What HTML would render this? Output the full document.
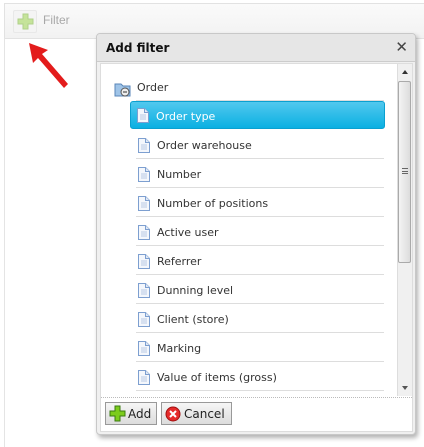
<!DOCTYPE html>
<html><head><style>
*{margin:0;padding:0;box-sizing:border-box}
body{width:424px;height:447px;background:#fff;position:relative;overflow:hidden;font-family:"DejaVu Sans","Liberation Sans",sans-serif;font-size:11px;color:#333}
.top{position:absolute;left:4px;top:3px;width:430px;height:36px;border:1px solid #e2e2e2;border-right:none;background:linear-gradient(#fafafa,#f2f2f2)}
.leftline{position:absolute;left:4px;top:38px;width:1px;height:409px;background:#e4e4e4}
.plusbtn{position:absolute;left:13px;top:10px;width:24px;height:23px;border:1px solid #e8e8e8;border-radius:2px;background:#f4f4f4}
.ftxt{position:absolute;left:43px;top:13px;color:#a8a8a8;font-size:12px;font-family:"Liberation Sans",sans-serif}
.dlg{position:absolute;left:96px;top:33px;width:320px;height:402px;background:#f0f0f0;border:1px solid #c8c8c8;border-radius:4px;box-shadow:2px 3px 5px rgba(0,0,0,.3)}
.title{position:absolute;left:0;top:0;width:318px;height:28px;background:#e6e6e6;border-bottom:1px solid #ccc;border-radius:4px 4px 0 0}
.title b{position:absolute;left:9px;top:7px;font-size:12px;color:#111;font-family:"DejaVu Sans",sans-serif}
.x{position:absolute;right:7px;top:4px;font-size:15px;font-weight:bold;color:#444}
.body{position:absolute;left:3px;top:29px;width:313px;height:369px;background:#fff;border:1px solid #ddd}
.list{position:absolute;left:0;top:0;width:296px;height:333px;overflow:hidden}
.sb{position:absolute;left:296px;top:17px;width:15px;height:315px;background:#f0f0f0;border-left:1px solid #ddd}
.thumb{position:absolute;left:297px;top:17px;width:13px;height:182px;border:1px solid #aaa;border-radius:2px;background:linear-gradient(90deg,#f4f4f4,#dcdcdc)}
.dots{position:absolute;left:0;top:333px;width:311px;border-top:1px dotted #bbb}
.row{position:absolute;left:35px;width:248px;height:29px;border-bottom:1px solid #ddd}
.row span{position:absolute;left:21px;top:9px}
.doc{position:absolute;left:2px;top:8px}
.sel{position:absolute;left:130px;top:101px;width:255px;height:28px;background:linear-gradient(#52c8ee,#0ab0e2);border:1px solid #0aa0d0;border-radius:3px;color:#fff}
.btn{position:absolute;top:402px;height:23px;border:1px solid #999;background:linear-gradient(#f6f6f6,#dcdcdc);font-size:12px;color:#222}
</style></head><body>
<svg width="0" height="0" style="position:absolute"><defs><symbol id="d" viewBox="0 0 12 15"><path d="M0.5 0.5h7l4 4v10h-11z" fill="#f4f7fc" stroke="#7d9fd0"/><path d="M7.5 0.5v4h4" fill="#dfe8f5" stroke="#7d9fd0"/><path d="M3 7h6M3 9h6M3 11h6" stroke="#b8c9e4"/></symbol></defs></svg>
<div class="top"></div>
<div class="leftline"></div>
<div class="plusbtn"><svg width="22" height="21" viewBox="0 0 22 21"><path d="M9 3h5v5h5v5h-5v5H9v-5H4V8h5z" fill="#c5e39a" stroke="#b0d08a"/></svg></div>
<div class="ftxt">Filter</div>
<svg style="position:absolute;left:26px;top:40px" width="46" height="52"><path d="M3 3 L22 10 L16 14 L42 44 L38 48 L12 18 L7 23 Z" fill="#e31c1c"/></svg>
<div class="dlg">
<div class="title"><b>Add filter</b><span class="x">✕</span></div>
<div class="body">
<div class="list">
<svg style="position:absolute;left:13px;top:16px" width="18" height="18"><path d="M1 4h6l2 2h7v10H1z" fill="#9fc4e8" stroke="#5a86b8"/><circle cx="11" cy="12" r="4" fill="#eee" stroke="#555"/><path d="M9 12h4" stroke="#333"/></svg>
<span style="position:absolute;left:36px;top:17px">Order</span>
<div style="position:absolute;left:35px;top:36px;width:248px;border-bottom:1px solid #ddd"></div>
<div class="row" style="top:66px"><svg class="doc" width="12" height="15"><use href="#d"/></svg><span>Order warehouse</span></div>
<div class="row" style="top:95px"><svg class="doc" width="12" height="15"><use href="#d"/></svg><span>Number</span></div>
<div class="row" style="top:124px"><svg class="doc" width="12" height="15"><use href="#d"/></svg><span>Number of positions</span></div>
<div class="row" style="top:153px"><svg class="doc" width="12" height="15"><use href="#d"/></svg><span>Active user</span></div>
<div class="row" style="top:182px"><svg class="doc" width="12" height="15"><use href="#d"/></svg><span>Referrer</span></div>
<div class="row" style="top:211px"><svg class="doc" width="12" height="15"><use href="#d"/></svg><span>Dunning level</span></div>
<div class="row" style="top:240px"><svg class="doc" width="12" height="15"><use href="#d"/></svg><span>Client (store)</span></div>
<div class="row" style="top:269px"><svg class="doc" width="12" height="15"><use href="#d"/></svg><span>Marking</span></div>
<div class="row" style="top:298px"><svg class="doc" width="12" height="15"><use href="#d"/></svg><span>Value of items (gross)</span></div>
</div>
<div style="position:absolute;left:296px;top:0;width:15px;height:17px;background:#f0f0f0;border-left:1px solid #ddd"><div style="position:absolute;left:4px;top:6px;border:3px solid transparent;border-bottom:4px solid #333;border-top:none"></div></div>
<div class="sb"><div style="position:absolute;left:4px;bottom:6px;border:3px solid transparent;border-top:4px solid #555;border-bottom:none"></div></div>
<div class="thumb"><div style="position:absolute;left:3px;top:86px;width:6px;height:6px;border-top:1px solid #666;border-bottom:1px solid #666"><div style="margin-top:2px;border-top:1px solid #666"></div></div></div>
<div class="dots"></div>
</div>
</div>
<div class="sel"><svg style="position:absolute;left:6px;top:6px" width="12" height="15"><use href="#d"/></svg><span style="position:absolute;left:25px;top:8px">Order type</span></div>
<div class="btn" style="left:105px;width:52px"><svg style="position:absolute;left:3px;top:2px" width="17" height="17"><path d="M6 1h5v5h5v5h-5v5H6v-5H1V6h5z" fill="#7ccc1c" stroke="#3a7a10"/></svg><span style="position:absolute;left:22px;top:4px">Add</span></div>
<div class="btn" style="left:161px;width:71px"><svg style="position:absolute;left:3px;top:3px" width="16" height="16"><circle cx="8" cy="8" r="7" fill="#e52a2a" stroke="#a01010"/><path d="M5 5l6 6M11 5l-6 6" stroke="#fff" stroke-width="2"/></svg><span style="position:absolute;left:22px;top:4px">Cancel</span></div>
</body></html>
